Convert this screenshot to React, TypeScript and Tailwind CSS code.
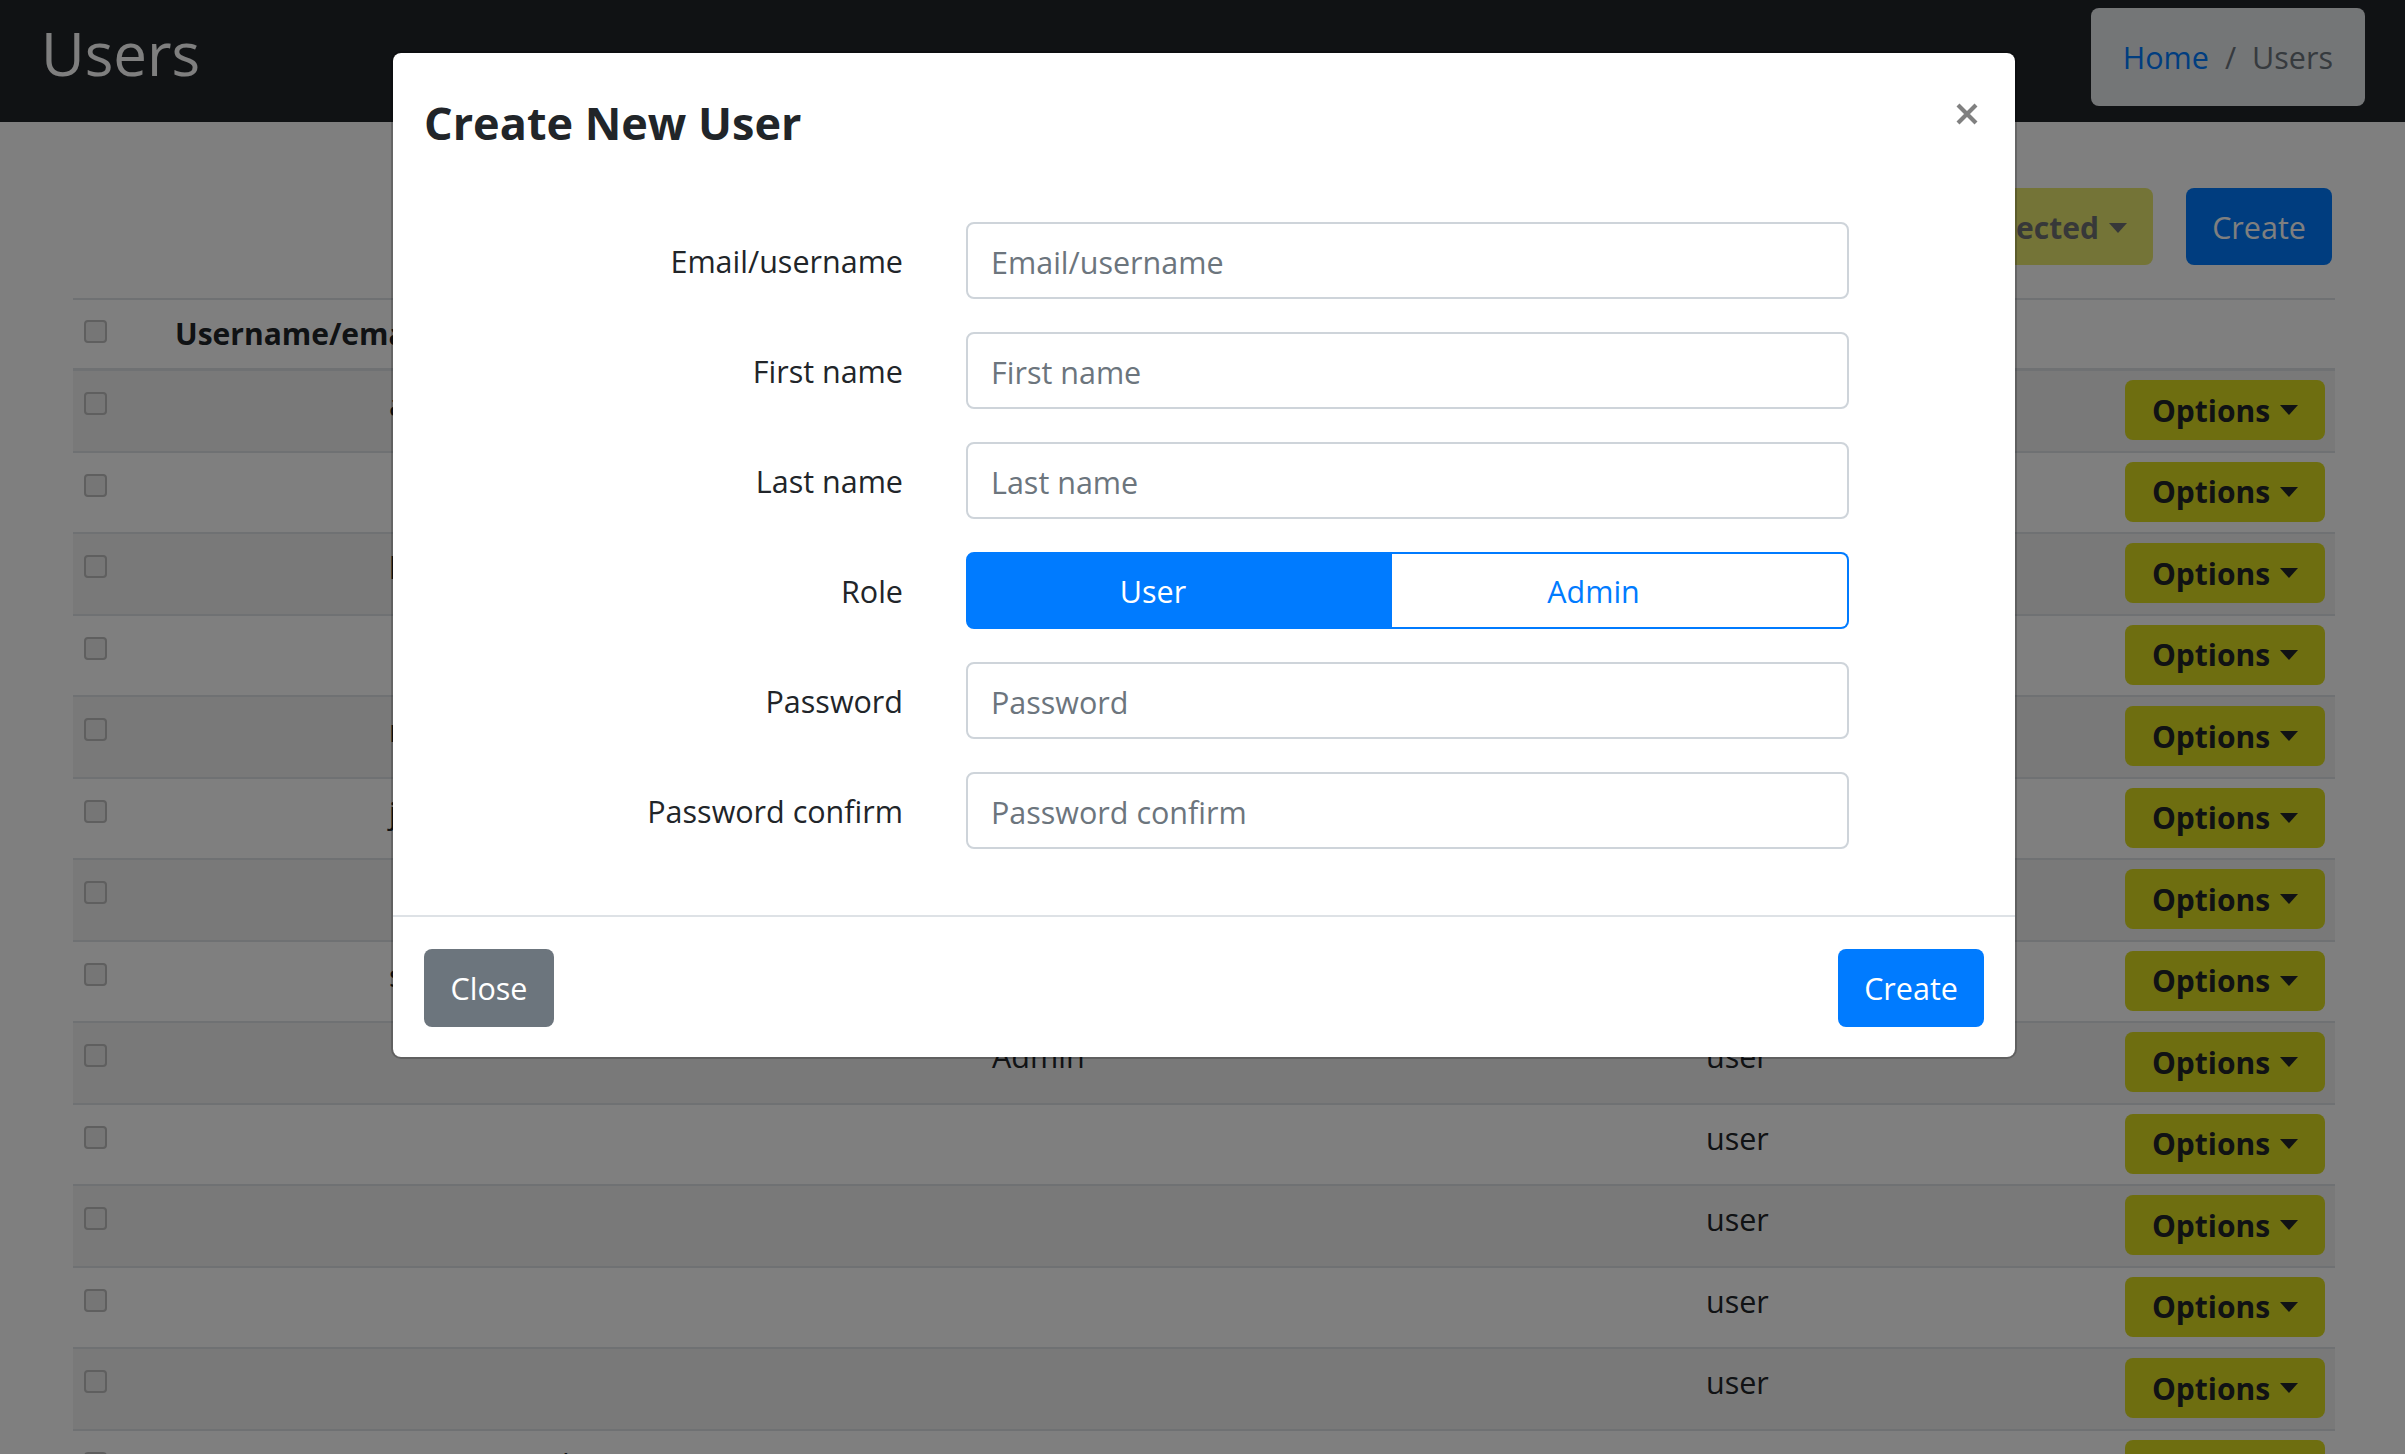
import React from "react";

const Caret = ({ color = "border-t-[#212529]" }: { color?: string }) => (
  <span
    className={`ml-[10px] inline-block h-0 w-0 border-x-[9px] border-t-[10px] border-x-transparent ${color}`}
  />
);

function Checkbox() {
  return <div className="h-[23px] w-[23px] rounded-[4px] border-2 border-[#bebebe] bg-[#ececec]" />;
}

const cols = "grid grid-cols-[92px_817px_348px_366px_1fr_220px]";

type Row = { c2?: string; c3?: string; c4?: string; role: string; wide?: boolean };

const rows: Row[] = [
  { c2: "admin@example.com", c3: "System", c4: "Administrator", role: "admin" },
  { role: "user" },
  { c2: "lena.fischer@example.com", c3: "Lena", c4: "Fischer", role: "user" },
  { role: "user" },
  { c2: "m.brown", c3: "Mark", c4: "Brown", role: "user" },
  { c2: "jdoe@example.com", c3: "John", c4: "Doe", role: "user" },
  { role: "user" },
  { c2: "support", c3: "Support", c4: "Team", role: "user" },
  { c3: "Admin", role: "user" },
  { role: "user" },
  { role: "user" },
  { role: "user" },
  { role: "user" },
  { c2: "anonymous.visitor@example.com", c3: "Anonymous", c4: "Visitor", role: "user", wide: true },
];

function FormRow({ label, placeholder, type = "text" }: { label: string; placeholder: string; type?: string }) {
  return (
    <div className="flex h-[77px] items-center">
      <label className="w-[510px] pt-[2px] text-right text-[30.5px] text-[#212529]">{label}</label>
      <input
        type={type}
        placeholder={placeholder}
        className="ml-[63px] h-[77px] w-[883px] rounded-[8px] border-2 border-[#ced4da] bg-white px-[23px] pt-[2px] text-[30.5px] text-[#495057] outline-none placeholder:text-[#6c757d]"
      />
    </div>
  );
}

export default function App() {
  return (
    <div className="relative h-[1454px] w-[2405px] overflow-hidden bg-white font-['Open_Sans',sans-serif] text-[#212529]">
      {/* Top bar */}
      <div className="flex h-[122px] items-start justify-between bg-[#212529] pl-[41px] pr-[40px]">
        <h1 className="mt-[23px] text-[60px] font-medium leading-none text-white">Users</h1>
        <nav className="mt-[8px] flex h-[98px] items-center rounded-[8px] bg-[#e9ecef] px-[32px] pt-[2px] text-[30.5px]">
          <span className="text-[#007bff]">Home</span>
          <span className="px-[16px] text-[#6c757d]">/</span>
          <span className="text-[#6c757d]">Users</span>
        </nav>
      </div>

      {/* Toolbar */}
      <div className="mt-[66px] flex justify-end gap-[33px] pr-[73px]">
        <button className="flex h-[77px] items-center rounded-[8px] bg-[#dcdc21] px-[26px] pt-[2px] text-[30px] font-bold text-[#212529] opacity-65">
          Delete selected
          <Caret />
        </button>
        <button className="flex h-[77px] w-[146px] items-center justify-center rounded-[8px] bg-[#007bff] pt-[2px] text-[30.5px] text-white">
          Create
        </button>
      </div>

      {/* Table */}
      <div className="ml-[73px] mt-[33px] w-[2262px]">
        <div className={`${cols} h-[71px] border-t-2 border-b border-[#dee2e6]`}>
          <div className="pl-[11px] pt-[20px]">
            <Checkbox />
          </div>
          <div className="pl-[10px] pt-[11px] text-[30px] font-bold leading-[45px]">Username/email</div>
          <div className="pl-[10px] pt-[11px] text-[30px] font-bold leading-[45px]">First name</div>
          <div className="pl-[10px] pt-[11px] text-[30px] font-bold leading-[45px]">Last name</div>
          <div className="pl-[10px] pt-[11px] text-[30px] font-bold leading-[45px]">Role</div>
          <div />
        </div>
        {rows.map((r, i) => (
          <div
            key={i}
            className={`${cols} h-[81.5px] border-t-2 border-[#dee2e6] ${i % 2 === 0 ? "bg-black/5" : ""}`}
          >
            <div className="pl-[11px] pt-[21px]">
              <Checkbox />
            </div>
            <div
              className={`${r.wide ? "pl-[10px]" : "pl-[224px]"} pt-[11px] text-[30.5px] leading-[1.5]`}
            >
              {r.c2}
            </div>
            <div className="pl-[10px] pt-[11px] text-[30.5px] leading-[1.5]">{r.c3}</div>
            <div className="pl-[10px] pt-[11px] text-[30.5px] leading-[1.5]">{r.c4}</div>
            <div className="pl-[10px] pt-[11px] text-[30.5px] leading-[1.5]">{r.role}</div>
            <div className="flex justify-end pr-[10px] pt-[9px]">
              <button className="flex h-[60px] w-[200px] items-center justify-center rounded-[8px] bg-[#dcdc21] text-[30px] font-bold text-[#212529]">
                Options
                <Caret />
              </button>
            </div>
          </div>
        ))}
      </div>

      {/* Backdrop */}
      <div className="absolute inset-0 bg-black/50" />

      {/* Modal */}
      <div className="absolute left-[391px] top-[51px] w-[1626px] rounded-[10px] border-2 border-black/20 bg-white bg-clip-padding">
        <div className="relative h-[137px] pl-[31px]">
          <h4 className="pt-[47px] text-[45px] font-bold leading-none text-[#212529]">Create New User</h4>
          <svg
            className="absolute left-[1563px] top-[50px]"
            width="22"
            height="22"
            viewBox="0 0 22 22"
          >
            <path d="M2 2 L20 20 M20 2 L2 20" stroke="#808080" strokeWidth="4.2" strokeLinecap="butt" />
          </svg>
        </div>

        <div className="flex flex-col gap-[33px] pb-[66px] pt-[32px]">
          <FormRow label="Email/username" placeholder="Email/username" />
          <FormRow label="First name" placeholder="First name" />
          <FormRow label="Last name" placeholder="Last name" />
          <div className="flex h-[77px] items-center">
            <label className="w-[510px] pt-[2px] text-right text-[30.5px] text-[#212529]">Role</label>
            <div className="ml-[63px] flex h-[77px] w-[883px]">
              <div className="flex h-full w-[426px] items-center justify-center rounded-l-[8px] border-2 border-[#007bff] bg-[#007bff] pr-[52px] pt-[2px] text-[30.5px] text-white">
                User
              </div>
              <div className="flex h-full w-[457px] items-center justify-center rounded-r-[8px] border-y-2 border-r-2 border-[#007bff] bg-white pr-[52px] pt-[2px] text-[30.5px] text-[#007bff]">
                Admin
              </div>
            </div>
          </div>
          <FormRow label="Password" placeholder="Password" type="password" />
          <FormRow label="Password confirm" placeholder="Password confirm" type="password" />
        </div>

        <div className="flex justify-between border-t-2 border-[#dee2e6] px-[31px] pb-[30px] pt-[32px]">
          <button className="flex h-[78px] w-[130px] items-center justify-center rounded-[8px] bg-[#6c757d] pt-[2px] text-[30.5px] text-white">
            Close
          </button>
          <button className="flex h-[78px] w-[146px] items-center justify-center rounded-[8px] bg-[#007bff] pt-[2px] text-[30.5px] text-white">
            Create
          </button>
        </div>
      </div>
    </div>
  );
}
